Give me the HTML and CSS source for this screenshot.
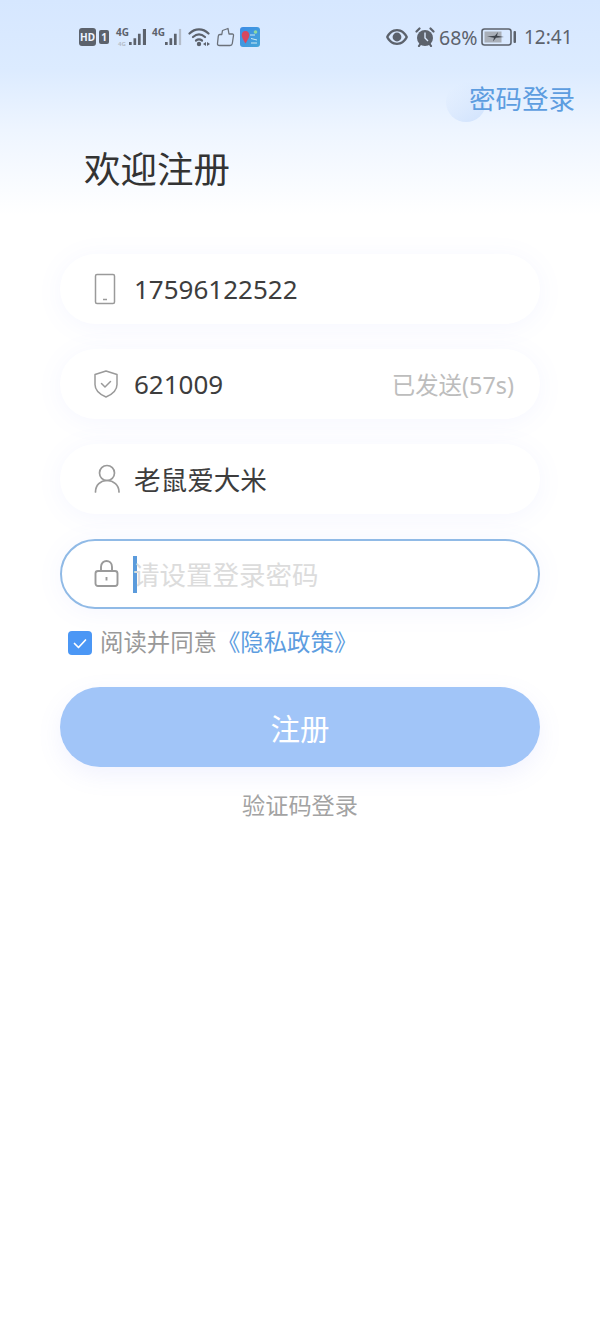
FILE: index.html
```html
<!DOCTYPE html>
<html>

<head>
  <meta charset="UTF-8">
  <title>欢迎注册</title>
  <link rel="stylesheet" href="styles.css">
</head>

<body>
  <div class="status">
    <div class="status-left">
      <span class="hd">HD</span>
      <span class="sim">1</span>
      <span class="signal">
        <span class="net">4G<small>4G</small></span>
        <svg width="19" height="18" viewBox="0 0 19 18"><path fill="#5c626c" d="M0 14.500h3V18H0zM5 10.500h3V18H5zM10 5.500h3V18h-3zM15.500 0H19v18h-3.500z"/></svg>
      </span>
      <span class="signal">
        <span class="net">4G</span>
        <svg width="19" height="18" viewBox="0 0 19 18"><path fill="#5c626c" d="M0 14.500h3V18H0zM5 10.500h3V18H5zM10 5.500h3V18h-3z"/><path fill="#b3bcc9" d="M15.500 0H18v18h-2.500z"/></svg>
      </span>
      <svg class="wifi" width="23" height="20" viewBox="0 0 23 20"><g fill="none" stroke="#5c626c" stroke-width="2.200" stroke-linecap="round"><path d="M1.500 6.500C7 1 15 1 20.500 6.500"/><path d="M5 10c3.700-3.300 8.300-3.300 12 0"/><path d="M8 13.500c2-1.400 4-1.400 6 0"/></g><circle cx="11" cy="17" r="2.200" fill="#5c626c"/><path fill="#5c626c" d="M18 15v4l-3-2zM19 15v4l3-2z"/></svg>
      <svg class="bag" width="19" height="20" viewBox="0 0 19 20"><path fill="none" stroke="#6b717a" stroke-width="1.300" stroke-linejoin="round" d="M3.500 18.500h10.500q2 0 2.300-2l1.200-8q.2-1.500-1.300-1.500H13L12 1.500 6.500 3.500 5.800 7.500H4Q2.500 7.500 2.300 9L1.500 16.500q-.2 2 2 2z"/></svg>
      <svg class="app" width="20" height="20" viewBox="0 0 20 20"><defs><linearGradient id="appbg" x1="0" y1="0" x2="1" y2="1"><stop offset="0" stop-color="#3c8ce6"/><stop offset="1" stop-color="#46a6d8"/></linearGradient></defs><rect width="20" height="20" rx="3" fill="url(#appbg)"/><path fill="#d8475f" d="M5.500 4c2.500 0 3.800 2 3.800 4.300S7 14 5.500 16.500C4 14 1.700 10.500 1.700 8.300S3 4 5.500 4z"/><path fill="none" stroke="#cdeaf2" stroke-width="1" d="M10 8h5M11 11.500l6 1.500M11 16h6"/><circle cx="15.500" cy="5" r="1.800" fill="#8fd9a0"/></svg>
    </div>
    <div class="status-right">
      <svg width="22" height="16" viewBox="0 0 22 16"><path fill="#5c626c" fill-rule="evenodd" d="M11 0c5 0 9 3.500 11 8-2 4.500-6 8-11 8S2 12.500 0 8c2-4.500 6-8 11-8zm0 2.200C7.500 2.200 4.400 4.600 2.500 8c1.900 3.400 5 5.800 8.500 5.800s6.600-2.400 8.500-5.800C17.600 4.600 14.500 2.200 11 2.200z"/><circle cx="11" cy="8" r="4.400" fill="#5c626c"/></svg>
      <svg class="alarm" width="20" height="20" viewBox="0 0 20 20"><circle cx="10" cy="11" r="8" fill="#5c626c"/><path fill="none" stroke="#dbe9fe" stroke-width="1.400" d="M10 5.500v5.500l3 3"/><path fill="none" stroke="#5c626c" stroke-width="2.200" stroke-linecap="round" d="M1.500 4.500L4.500 1.500M18.500 4.500L15.500 1.500M4 19l1-1.500M16 19l-1-1.500"/></svg>
      <span class="percent">68%</span>
      <svg class="battery" width="35" height="20" viewBox="0 0 35 20"><rect x="1" y="2" width="29" height="16" rx="2.500" fill="none" stroke="#5c626c" stroke-width="1.600"/><rect x="3.500" y="4.500" width="17" height="11" fill="#a9afb8"/><path fill="#3f444c" d="M6 9.500l8-.8 3-3.700-1 3.700 7 1.300-8 .8-3 3.700 1-3.700z"/><rect x="32.500" y="4" width="2.500" height="12" rx="1" fill="#5c626c"/></svg>
      <span class="clock">12:41</span>
    </div>
  </div>

  <div class="top-link">
    <a class="switch">密码登录</a>
  </div>

  <h1 class="title">欢迎注册</h1>

  <div class="form">
    <div class="field">
      <svg class="icon" width="26" height="32" viewBox="0 0 26 32"><g fill="none" stroke="#9a9a9a" stroke-width="1.500"><rect x="1.500" y="1.500" width="19" height="29" rx="1.500"/><path d="M9 26.500h4"/></g></svg>
      <span class="value">17596122522</span>
    </div>
    <div class="field">
      <svg class="icon" width="26" height="32" viewBox="0 0 26 32"><g fill="none" stroke="#9a9a9a" stroke-width="1.500" stroke-linecap="round" stroke-linejoin="round"><path d="M12 3l11 3.500v10c0 6-5 10-11 12.500C6 26.500 1 22.500 1 16.500v-10z"/><path d="M7.500 15.500l3.500 3.500 5.500-5.500"/></g></svg>
      <span class="value">621009</span>
      <span class="sent">已发送(57s)</span>
    </div>
    <div class="field">
      <svg class="icon" width="26" height="32" viewBox="0 0 26 32"><g fill="none" stroke="#9a9a9a" stroke-width="1.700" stroke-linecap="round"><circle cx="13" cy="10" r="7.500"/><path d="M1.500 29c0-7 5-11.500 11.500-11.500S25 22 25 29"/></g></svg>
      <span class="value value-name">老鼠爱大米</span>
    </div>
    <div class="field field-active">
      <svg class="icon" width="26" height="32" viewBox="0 0 26 32"><g fill="none" stroke="#9a9a9a" stroke-width="1.900"><rect x="1.500" y="13" width="22" height="15" rx="2.500"/><path d="M7 13V9c0-8 11-8 11 0v4"/><path d="M12.500 19v3.500"/></g></svg>
      <span class="cursor"></span>
      <span class="placeholder">请设置登录密码</span>
    </div>

    <div class="agree">
      <span class="check">
        <svg width="24" height="24" viewBox="0 0 24 24"><path fill="none" stroke="#fff" stroke-width="1.700" stroke-linecap="round" stroke-linejoin="round" d="M6.500 11.500l4 4L17.500 8"/></svg>
      </span>
      <span class="agree-text">阅读并同意</span>
      <a class="agree-text policy">《隐私政策》</a>
    </div>

    <button class="submit">注册</button>
    <a class="alt">验证码登录</a>
  </div>
</body>

</html>
```
FILE: styles.css
```css
body {
  margin: 0;
  min-height: 1333px;
  background: linear-gradient(#d6e7ff 0, #dcebff 70px, #eef5ff 130px, #fff 215px);
  font-family: "Noto Sans", "Noto Sans CJK SC", sans-serif;
  color: #3a3a3a;
}

.status {
  height: 74px;
  padding: 0 29px 0 79px;
  display: flex;
  justify-content: space-between;
  align-items: center;
  color: #5c626c;
}

.status-left,
.status-right {
  display: flex;
  align-items: center;
}

.hd {
  width: 17px;
  height: 18px;
  border-radius: 3px;
  background: #5c626c;
  color: #eef4ff;
  font-size: 10px;
  font-weight: 700;
  line-height: 18px;
  text-align: center;
}

.sim {
  width: 10px;
  height: 14px;
  margin-left: 3px;
  border-radius: 2px;
  background: #5c626c;
  color: #eef4ff;
  font-size: 10px;
  font-weight: 700;
  line-height: 14px;
  text-align: center;
}

.signal {
  width: 30px;
  height: 18px;
  margin-left: 7px;
  display: flex;
  justify-content: space-between;
  align-items: center;
}

.signal + .signal {
  margin-left: 6px;
}

.net {
  position: relative;
  align-self: flex-start;
  font-size: 10px;
  font-weight: 700;
  line-height: 9px;
}

.net small {
  position: absolute;
  left: 2px;
  top: 13px;
  font-size: 6px;
  line-height: 6px;
  color: #b5bdc9;
}

.wifi {
  margin-left: 6px;
}

.bag {
  margin-left: 5px;
}

.app {
  margin-left: 5px;
}

.alarm {
  margin-left: 7px;
}

.percent {
  margin-left: 4px;
  width: 38px;
  font-size: 19.500px;
  white-space: nowrap;
}

.battery {
  margin-left: 4px;
}

.clock {
  width: 47px;
  margin-left: 8px;
  font-size: 19px;
  white-space: nowrap;
}

.top-link {
  height: 50px;
  padding-right: 25px;
  display: flex;
  justify-content: flex-end;
  align-items: center;
}

.switch {
  position: relative;
  color: #5d9de0;
  font-size: 26.500px;
  line-height: 50px;
}

.switch::before {
  content: "";
  position: absolute;
  left: -23px;
  top: 8px;
  width: 40px;
  height: 40px;
  border-radius: 50%;
  background: linear-gradient(150deg, rgba(214, 231, 255, 0) 15%, #d3e4fd 90%);
  z-index: -1;
}

.title {
  margin: 20px 0 0 84px;
  font-size: 36.500px;
  font-weight: 400;
  line-height: 50px;
  color: #333;
}

.form {
  margin: 60px 60px 0;
  display: flex;
  flex-direction: column;
  gap: 25px;
}

.field {
  height: 70px;
  box-sizing: border-box;
  padding: 0 26px 0 34px;
  display: flex;
  align-items: center;
  border-radius: 35px;
  background: #fff;
  box-shadow: 0 3px 26px rgba(120, 130, 250, 0.07);
}

.field-active {
  border: 2px solid #90bae6;
  padding: 0 26px 0 32px;
}

.icon {
  flex: none;
}

.value {
  margin-left: 14px;
  font-size: 26px;
  color: #3d3d3d;
}

.value-name {
  margin-top: -2px;
  font-size: 26.600px;
}

.sent {
  margin-left: auto;
  font-size: 23.400px;
  color: #bdbdbd;
}

.cursor {
  width: 4px;
  height: 37px;
  margin-left: 13px;
  background: #5b9bdc;
}

.placeholder {
  margin: -2px 0 0 -4px;
  font-size: 26.500px;
  color: #dcdcdc;
}

.agree {
  margin: -3px 0 0 8px;
  height: 24px;
  display: flex;
  align-items: center;
  font-size: 23.400px;
  color: #999;
}

.agree-text {
  margin-top: -4px;
}

.check {
  width: 24px;
  height: 24px;
  margin-right: 8px;
  border-radius: 4px;
  background: #4b97f5;
}

.policy {
  color: #5d9de0;
}

.submit {
  height: 80px;
  margin-top: 7px;
  border: 0;
  border-radius: 40px;
  background: #a1c5f8;
  box-shadow: 0 8px 24px rgba(120, 130, 250, 0.1);
  color: #fff;
  font-family: inherit;
  font-size: 29.500px;
}

.alt {
  margin-top: -2px;
  text-align: center;
  font-size: 23.200px;
  line-height: 30px;
  color: #a3a3a3;
}
```
